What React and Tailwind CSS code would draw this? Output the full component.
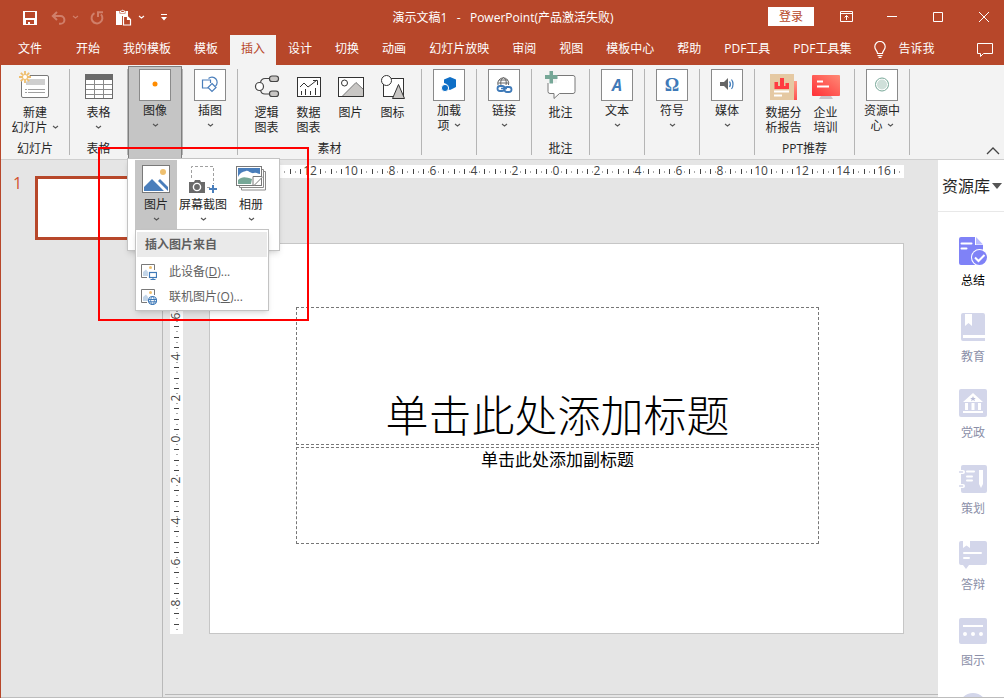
import React from 'react';
import clsx from 'clsx';

const TABS = ['开始', '我的模板', '模板', '插入', '设计', '切换', '动画', '幻灯片放映', '审阅', '视图', '模板中心', '帮助', 'PDF工具', 'PDF工具集'];

/* ---------- small icons ---------- */

const Chevron = ({ className = 'text-[#555]' }) => (
  <svg className={clsx('shrink-0', className)} width="7" height="5" viewBox="0 0 7 5" fill="none" stroke="currentColor" strokeWidth="1.1">
    <path d="M1 1l2.5 2L6 1" />
  </svg>
);

const SaveIcon = () => (
  <svg width="14" height="14" viewBox="0 0 14 14" fill="#fff" fillRule="evenodd">
    <path d="M0 0h14v14H0zM2 1v6h10V1zM3 9v4h2v-2h2v2h4V9z" />
  </svg>
);

const UndoIcon = () => (
  <svg width="15" height="14" viewBox="0 0 15 14" fill="none" stroke="#d07f6a" strokeWidth="2">
    <path d="M6 1L1.8 5 6 9M2 5h7.5a3.8 3.8 0 010 7.8H8" />
  </svg>
);

const RedoIcon = () => (
  <svg width="14" height="14" viewBox="0 0 14 14" fill="none" stroke="#d07f6a" strokeWidth="2">
    <path d="M4.5 2.2A5.4 5.4 0 1011 3.4M8 6V1.2h5" />
  </svg>
);

const PasteIcon = () => (
  <svg width="16" height="17" viewBox="0 0 16 17">
    <path d="M0 2h3.5v2.5h6V2H12v5H6v9H0z" fill="#fff" />
    <path d="M4.5 3.5V2h1a1.2 1.2 0 012.2 0h1v1.5z" fill="none" stroke="#fff" />
    <path d="M7.5 7.500h4l3 3v5.500h-7zM11.500 7.500v3h3" fill="none" stroke="#fff" strokeWidth="1.2" />
  </svg>
);

const CustomizeIcon = () => (
  <svg width="6" height="8" viewBox="0 0 6 8" fill="#fff">
    <path d="M0 0h6v1H0zM0 3h6L3 6.500z" />
  </svg>
);

/* ---------- ribbon icons, 32px ---------- */

const NewSlideIcon = () => (
  <svg width="32" height="32" viewBox="0 0 32 32" fill="none">
    <rect x="2.500" y="4.500" width="27" height="22" rx="1.500" fill="#fff" stroke="#797979" />
    <path d="M7 8h19v6H7z" fill="#cfcfcf" />
    <path d="M6 18.500h2m1 0h17M6 21.500h2m1 0h17" stroke="#a0a0a0" />
    <circle cx="6" cy="6" r="5" fill="#f3f3f3" />
    <path d="M6 0v12M0 6h12M1.800 1.800l8.400 8.400M10.200 1.800l-8.400 8.400" stroke="#efbe6d" strokeWidth="1.800" />
    <circle cx="6" cy="6" r="2" fill="#fff" />
  </svg>
);

const TableIcon = () => (
  <svg width="32" height="32" viewBox="0 0 32 32" fill="none">
    <rect x="2.500" y="3.500" width="27" height="24" fill="#fff" stroke="#6a6a6a" />
    <path d="M2 3h28v6H2z" fill="#6a6a6a" />
    <path d="M3 13.500h26M3 18.500h26M3 23.500h26M11.500 9v18M20.500 9v18" stroke="#8b8b8b" />
  </svg>
);

const LogicIcon = () => (
  <svg width="32" height="32" viewBox="0 0 32 32" fill="none" stroke="#444" strokeWidth="1.200">
    <path d="M18 7.500h-4c-3 0-4 1-4.500 4M18 23h-4c-3 0-4-1-4.500-4" />
    <circle cx="8.500" cy="15.500" r="4" fill="#fff" />
    <rect x="18.500" y="5" width="9" height="5.500" rx="2.500" fill="#c8c6c4" />
    <rect x="18.500" y="20" width="9" height="5.500" rx="2.500" fill="#c8c6c4" />
  </svg>
);

const DataChartIcon = () => (
  <svg width="32" height="32" viewBox="0 0 32 32" fill="none" stroke="#333">
    <rect x="4.500" y="6.500" width="23" height="19" fill="#fff" />
    <path d="M8.500 20v4M12.500 18v6M17.500 20v4M22.500 17v7" />
    <path d="M7 16l4-4 4 4 4-3 5-4M20 9.500h4.500V14" />
  </svg>
);

const ImageIcon = () => (
  <svg width="32" height="32" viewBox="0 0 32 32" fill="none" stroke="#333">
    <rect x="3.500" y="6.500" width="25" height="19" fill="#fff" />
    <path d="M7 25.500l14-14 7.500 7v7z" fill="#c8c6c4" stroke="#777" />
    <circle cx="9.500" cy="12" r="3" fill="#fff" />
    <path d="M3.500 25.500h25v-19" />
  </svg>
);

const ShapesIcon = () => (
  <svg width="32" height="32" viewBox="0 0 32 32" fill="none" stroke="#333">
    <rect x="6.500" y="7.500" width="20" height="18" fill="#fff" />
    <circle cx="9.500" cy="9.500" r="5" fill="#fff" />
    <path d="M15.500 27.500l6-14 6 14z" fill="#c8c6c4" />
  </svg>
);

const CommentIcon = () => (
  <svg width="32" height="32" viewBox="0 0 32 32" fill="none">
    <path d="M5.500 4.500h22.500a2 2 0 012 2v14a2 2 0 01-2 2H14.500l-5.500 5v-5H5a2 2 0 01-2-2v-14z" fill="#fff" stroke="#797979" />
    <path d="M0 0h12v12H0z" fill="#f3f3f3" />
    <path d="M4.500 0H8v4h4.500v4H8v4.500H4.500V8H0V4h4.500z" fill="#76a797" />
  </svg>
);

const ReportIcon = () => (
  <svg width="32" height="32" viewBox="0 0 32 32">
    <defs>
      <linearGradient id="report" x1="0" y1="0" x2="0" y2="1">
        <stop offset="0" stopColor="#ff9a86" />
        <stop offset="1" stopColor="#ff4f50" />
      </linearGradient>
    </defs>
    <path d="M20 10h9v19h-9z" fill="url(#report)" />
    <path d="M2 3h24v26H2z" fill="#e5c9a3" />
    <path d="M6.500 11H10v7H6.500zM12 7h4v11h-4zM17.500 12H21v6h-3.500zM6.500 15H21v3H6.500z" fill="#ff3b41" />
    <path d="M6 20.500h15M6 24.500h8" stroke="#fff" strokeWidth="2" />
  </svg>
);

const TrainingIcon = () => (
  <svg width="32" height="32" viewBox="0 0 32 32">
    <defs>
      <linearGradient id="training" x1="0" y1="1" x2="1" y2="0">
        <stop offset="0" stopColor="#ff2f36" />
        <stop offset="1" stopColor="#ff8a76" />
      </linearGradient>
    </defs>
    <path d="M11 25h10l2 3H9z" fill="#c9c4c9" />
    <rect x="2" y="4" width="28" height="21" rx="1" fill="url(#training)" />
    <path d="M7 10.500h6M7 15.500h12" stroke="#fff" strokeWidth="2" />
  </svg>
);

/* ---------- glyphs in the boxed (collapsed) groups, 20px ---------- */

const DotGlyph = () => (
  <svg width="20" height="20" viewBox="0 0 20 20"><circle cx="10" cy="9" r="2.500" fill="#ff8c00" /></svg>
);

const IllustrationGlyph = () => (
  <svg width="20" height="20" viewBox="0 0 20 20" fill="none" stroke="#4a7ebb" strokeWidth="1.200">
    <path d="M8 13H2.500V5h8v3" />
    <path d="M8.500 3.500a5 5 0 117 7.500" />
    <path d="M12 8.500l4 4-4 4-4-4z" fill="#fff" />
  </svg>
);

const AddinGlyph = () => (
  <svg width="20" height="20" viewBox="0 0 20 20" fill="#0f6fc6">
    <path d="M11 2l6 2.500v7.500l-6 3-3.500-1.500V9L5 8V4.500z" />
    <circle cx="6" cy="13" r="3.600" stroke="#fff" />
  </svg>
);

const LinkGlyph = () => (
  <svg width="20" height="20" viewBox="0 0 20 20" fill="none">
    <path d="M4 10a5.500 5.500 0 1110.500 0M3.800 8h11M9.500 2.500c-3 2-3 5-2.500 7.500M9.500 2.500c3 2 3 5 2.500 7.500M5 5h9" stroke="#666" />
    <rect x="3.500" y="11" width="7" height="5" rx="2.500" stroke="#3f7ab8" strokeWidth="1.800" />
    <rect x="10.500" y="12" width="7" height="5" rx="2.500" stroke="#3f7ab8" strokeWidth="1.800" />
    <path d="M7 13.500h6" stroke="#3f7ab8" strokeWidth="1.500" />
  </svg>
);

const MediaGlyph = () => (
  <svg width="20" height="20" viewBox="0 0 20 20" fill="none">
    <path d="M3 7h4l4-4v12l-4-4H3z" fill="#666" />
    <path d="M12.500 6.500c1 1.500 1 4 0 5.500M14.500 4.500c2 2.500 2 7 0 9.500" stroke="#3f7ab8" strokeWidth="1.200" />
  </svg>
);

const ResourceGlyph = () => (
  <svg width="20" height="20" viewBox="0 0 20 20">
    <circle cx="10" cy="9.500" r="6.500" fill="#fff" stroke="#76a797" />
    <circle cx="10" cy="9.500" r="5" fill="#cfe0da" />
  </svg>
);

/* ---------- image menu icons ---------- */

const PictureIcon = () => (
  <svg width="28" height="28" viewBox="0 0 28 28">
    <rect x=".5" y=".5" width="27" height="27" fill="#fff" stroke="#797979" />
    <circle cx="21" cy="7" r="3" fill="#efc06f" />
    <path d="M2 26v-4l8-8 12 12zM16 16l2-2 8 8v4z" fill="#4a7ebb" />
  </svg>
);

const ScreenshotIcon = () => (
  <svg width="28" height="28" viewBox="0 0 28 28" fill="none">
    <path d="M2.500 13V1.500h22V19M18 22.500h3" stroke="#a0a0a0" strokeDasharray="3 2" />
    <path d="M0 17h5l1-2h5l1 2h4v11H0z" fill="#6a6a6a" />
    <circle cx="8" cy="22" r="3.600" fill="#6a6a6a" stroke="#fff" strokeWidth="1.400" />
    <path d="M20 24h8M24 20v8" stroke="#4a7ebb" strokeWidth="2" />
  </svg>
);

const AlbumIcon = () => (
  <svg width="30" height="28" viewBox="0 0 30 28" fill="none">
    <path d="M5.500 21v4h24V6.500H26" fill="#fff" stroke="#8b8b8b" />
    <path d="M3.500 20v2.500h24V4.500H25" fill="#fff" stroke="#8b8b8b" />
    <rect x=".5" y="1.500" width="25" height="19" fill="#fff" stroke="#797979" />
    <path d="M2 3h22v8l-6 3H2z" fill="#4a7ebb" />
    <path d="M2 12c3-6 6-5 8-6s5 3 8 2 4 1 6 1v5H2z" fill="#fff" />
    <path d="M2 15c4-4 8-3 14-1l-1 5H2z" fill="#76a797" />
    <path d="M17 20.500v-9h9v1l-8 8z" fill="#fff" stroke="#797979" />
  </svg>
);

const DeviceIcon = () => (
  <svg width="16" height="16" viewBox="0 0 16 16" fill="none">
    <path d="M6 13.500H.5V.5h13V6" fill="#fff" stroke="#797979" />
    <circle cx="9.500" cy="3.500" r="1.500" fill="#efc06f" />
    <path d="M2 12V8l3-2.500L7 8v4z" fill="#c3d5e8" />
    <rect x="8.500" y="8.500" width="7" height="5" fill="#fff" stroke="#3f7ab8" strokeWidth="1.200" />
    <path d="M12 13.500V15M9.500 15.500h5" stroke="#3f7ab8" />
  </svg>
);

const OnlineIcon = () => (
  <svg width="16" height="16" viewBox="0 0 16 16" fill="none">
    <path d="M6 13.500H.5V.5h13V6" fill="#fff" stroke="#797979" />
    <circle cx="9.500" cy="3.500" r="1.500" fill="#efc06f" />
    <path d="M2 12V8l3-2.500L7 8v4z" fill="#c3d5e8" />
    <circle cx="11.500" cy="11.500" r="4" fill="#fff" stroke="#3f7ab8" strokeWidth="1.200" />
    <path d="M7.500 10.500h8M7.500 12.800h8M11.500 7.500c-2.500 2.500-2.500 5.500 0 8 2.500-2.500 2.500-5.500 0-8" stroke="#3f7ab8" />
  </svg>
);

/* ---------- resource panel icons, 28px ---------- */

const resources = [
  {
    label: '总结',
    active: true,
    icon: (
      <>
        <path d="M2 0h14v8h8v20H2a2 2 0 01-2-2V2a2 2 0 012-2z" fill="#7f82f7" />
        <path d="M17 0l7 7.500h-7z" fill="#b8baff" />
        <path d="M2.500 6.500h10M2.500 11.500h5" stroke="#fff" strokeWidth="2" strokeLinecap="round" />
        <circle cx="20.500" cy="20.500" r="8.500" fill="#fff" />
        <circle cx="20.500" cy="20.500" r="7.500" fill="#7f82f7" />
        <path d="M16 20.500l3.500 3.500 6-6" fill="none" stroke="#fff" strokeWidth="2" />
      </>
    ),
  },
  {
    label: '教育',
    icon: (
      <>
        <path d="M4 0h20a2 2 0 012 2v20H4v3h22v3H4a2 2 0 01-2-2V2a2 2 0 012-2z" fill="#d3d6ea" />
        <path d="M6 1h7v12l-3.500-3L6 13z" fill="#fff" />
      </>
    ),
  },
  {
    label: '党政',
    icon: (
      <>
        <rect width="28" height="28" rx="2" fill="#d3d6ea" />
        <path d="M14 4l10 9H4zM6 14h3v7H6zM12.500 14h3v7h-3zM19 14h3v7h-3zM4 22h20v2H4z" fill="#fff" />
        <path d="M14 7l.8 2h2l-1.500 1.300.6 2L14 11l-1.900 1.300.6-2L11.200 9h2z" fill="#b9bdd8" />
      </>
    ),
  },
  {
    label: '策划',
    icon: (
      <>
        <rect x="2" width="26" height="28" rx="2" fill="#d3d6ea" />
        <path d="M0 5h4a2 2 0 010 4H0zM0 19h4a2 2 0 010 4H0z" fill="#fff" />
        <path d="M0 7h3.500M0 21h3.500" stroke="#d3d6ea" strokeWidth="1.500" strokeLinecap="round" />
        <path d="M8 6.500h7M8 11.500h5M8 15.500h5" stroke="#fff" strokeWidth="2" strokeLinecap="round" />
        <path d="M20 5h4v14l-2 4-2-4z" fill="#fff" />
      </>
    ),
  },
  {
    label: '答辩',
    icon: (
      <>
        <path d="M2 0h24a2 2 0 012 2v20a2 2 0 01-2 2H10l-3 4-3-4H2a2 2 0 01-2-2V2a2 2 0 012-2z" fill="#d3d6ea" />
        <path d="M4 0h7v7L7.500 4.500 4 7z" fill="#fff" />
        <path d="M5 12h17M5 17h5" stroke="#fff" strokeWidth="2" strokeLinecap="round" />
      </>
    ),
  },
  {
    label: '图示',
    icon: (
      <>
        <rect y="1" width="28" height="26" rx="2" fill="#d3d6ea" />
        <path d="M4 9h20" stroke="#fff" strokeWidth="2" />
        <path d="M4 17a2 2 0 104 0 2 2 0 10-4 0M12 17a2 2 0 104 0 2 2 0 10-4 0M20 17a2 2 0 104 0 2 2 0 10-4 0" fill="#fff" />
      </>
    ),
  },
];

/* ---------- ribbon pieces ---------- */

function Group({ width, label, children }) {
  return (
    <div className="flex shrink-0">
      <div className={clsx('relative flex flex-col', width)}>
        <div className="flex flex-1 justify-center">{children}</div>
        {label && <div className="mb-[3px] h-[15px] text-center leading-[15px]">{label}</div>}
      </div>
      <div className="mt-1 h-[86px] w-px bg-[#b5b5b5]" />
    </div>
  );
}

function RibbonButton({ icon, lines, width = 'w-[42px]', menu }) {
  return (
    <button className={clsx('flex flex-col items-center pt-1.5 leading-[15px]', width)}>
      {icon}
      {lines.map((line, i) => (
        <span key={line} className={clsx('flex h-[15px] items-center gap-1 whitespace-nowrap', i === 0 && 'mt-0.5')}>
          {line}
          {menu && lines.length > 1 && i === lines.length - 1 && <Chevron />}
        </span>
      ))}
      {menu && lines.length === 1 && <span className="flex h-[15px] items-center"><Chevron /></span>}
    </button>
  );
}

function BoxedGroup({ icon, lines, active, children }) {
  return (
    <Group width="w-[54px]">
      <button
        className={clsx(
          'flex w-full flex-col items-center leading-[15px]',
          active ? 'mt-px border border-b-0 border-[#7f7f7f] bg-[#c5c5c5] pt-0.5' : 'pt-1'
        )}
      >
        <span className="flex size-8 shrink-0 items-center justify-center border border-[#8a8a8a] bg-white">{icon}</span>
        <span className="mt-0.5 whitespace-nowrap">{lines[0]}</span>
        <span className="flex h-[15px] items-center gap-1">
          {lines[1]}
          <Chevron />
        </span>
      </button>
      {children}
    </Group>
  );
}

function ImageMenu() {
  const items = [
    { label: '图片', icon: <PictureIcon />, width: 'w-[42px]', open: true },
    { label: '屏幕截图', icon: <ScreenshotIcon />, width: 'w-[52px]' },
    { label: '相册', icon: <AlbumIcon />, width: 'w-[44px]' },
  ];
  return (
    <div className="absolute top-[93px] -left-px z-10 flex h-[93px] border border-[#c3c3c3] bg-white pt-px pr-1.5 pl-[7px] shadow-md">
      {items.map(({ label, icon, width, open }) => (
        <button
          key={label}
          className={clsx('flex h-[70px] shrink-0 flex-col items-center pt-[5px] leading-[15px]', width, open && 'bg-[#c5c5c5]')}
        >
          {icon}
          <span className="mt-1 whitespace-nowrap">{label}</span>
          <span className="flex h-[15px] items-center"><Chevron /></span>
        </button>
      ))}
      <div className="absolute top-[70px] left-[7px] w-[134px] border border-[#c3c3c3] bg-white px-px pt-0.5 pb-px text-[#5f5f5f] shadow-md">
        <div className="mb-0.5 h-[25px] bg-[#eaeaea] px-2 font-bold leading-[25px]">插入图片来自</div>
        <button className="flex h-[25px] w-full items-center gap-3 px-1">
          <DeviceIcon />
          <span>此设备(<u>D</u>)...</span>
        </button>
        <button className="flex h-[25px] w-full items-center gap-3 px-1">
          <OnlineIcon />
          <span>联机图片(<u>O</u>)...</span>
        </button>
      </div>
    </div>
  );
}

/* ---------- rulers: one number every 41px, a mark every eighth of it ---------- */

function Ruler({ vertical }) {
  const half = vertical ? 195 : 347;
  const marks = [];
  for (let i = -68; i <= 68; i++) {
    const pos = Math.round((i * 41) / 8);
    if (Math.abs(pos) > half - 2) continue;
    if (i % 8 === 0) {
      marks.push(
        <text key={i} x={vertical ? 0 : pos} y={vertical ? 0 : 10} textAnchor="middle" fontSize="12" fill="#444"
          transform={vertical ? `translate(10 ${pos}) rotate(-90)` : undefined}>
          {Math.abs(i / 4)}
        </text>
      );
    } else {
      const big = i % 2 === 0;
      const from = big ? 4 : 6;
      const size = big ? 5 : 2;
      // two-digit numbers cover the marks right beside them
      const crowded = !vertical && Math.abs(i) > 36 && (i % 8 === 1 || i % 8 === -1 || i % 8 === 7 || i % 8 === -7);
      if (crowded) continue;
      marks.push(
        <rect key={i} x={vertical ? from : pos} y={vertical ? pos : from} width={vertical ? size : 1} height={vertical ? 1 : size}
          fill={big ? '#444' : '#aaa'} />
      );
    }
  }
  return (
    <svg
      className={clsx('overflow-visible bg-white', vertical ? 'h-full w-[13px]' : 'h-[13px] w-full')}
      viewBox={vertical ? '0 -196 13 391' : '-347 0 695 13'}
    >
      {marks}
    </svg>
  );
}

/* ---------- page ---------- */

export default function App() {
  return (
    <div className="relative flex h-screen flex-col overflow-hidden border-l border-[#b7472a] bg-[#e5e5e5] font-['Open_Sans','Noto_Sans_CJK_SC',sans-serif] text-xs text-[#262626]">
      <header className="shrink-0 bg-[#b7472a] text-white">
        {/* Title bar */}
        <div className="flex h-[35px] items-center">
          <div className="flex flex-1 items-center pl-[22px]">
            <button aria-label="保存"><SaveIcon /></button>
            <button aria-label="撤消" className="ml-[14px] flex items-center gap-1.5"><UndoIcon /><Chevron className="text-[#d07f6a]" /></button>
            <button aria-label="恢复" className="ml-[11px]"><RedoIcon /></button>
            <button aria-label="粘贴" className="ml-3 flex items-center gap-1.5"><PasteIcon /><Chevron className="text-white" /></button>
            <button aria-label="自定义快速访问工具栏" className="ml-4"><CustomizeIcon /></button>
          </div>
          <div className="pr-1.5 whitespace-pre">{'演示文稿1   -   PowerPoint(产品激活失败)'}</div>
          <div className="flex flex-1 items-center justify-end pr-[15px] pb-0.5">
            <button className="mr-[26px] h-[19px] w-[46px] bg-white leading-[19px] text-[#b7472a]">登录</button>
            <button aria-label="功能区显示选项" className="mr-[34px]">
              <svg width="13" height="11" viewBox="0 0 13 11" fill="none" stroke="#fff">
                <path d="M.5.5h12v10H.5zM.5 2.500h12M6.500 9V4.500M4.500 6.500l2-2 2 2" />
              </svg>
            </button>
            <button aria-label="最小化" className="mr-9">
              <svg width="10" height="10" viewBox="0 0 10 10" stroke="#fff"><path d="M0 4.500h10" /></svg>
            </button>
            <button aria-label="最大化" className="mr-9">
              <svg width="10" height="10" viewBox="0 0 10 10" fill="none" stroke="#fff"><path d="M.5.5h9v9h-9z" /></svg>
            </button>
            <button aria-label="关闭">
              <svg width="10" height="10" viewBox="0 0 10 10" stroke="#fff"><path d="M0 0l10 10M10 0L0 10" /></svg>
            </button>
          </div>
        </div>

        {/* Tabs */}
        <nav className="flex h-[30px] items-stretch gap-px whitespace-nowrap pl-[6px]">
          <button className="mr-[11px] px-[11px] pb-0.5">文件</button>
          {TABS.map((tab) => (
            <button key={tab} className={clsx('px-[11px] pb-0.5', tab === '插入' && 'bg-[#f3f3f3] text-[#b7472a]')}>
              {tab}
            </button>
          ))}
          <button className="flex items-center gap-3 px-[11px] pb-0.5">
            <svg width="12" height="17" viewBox="0 0 12 17" fill="none" stroke="#fff" strokeWidth="1.200">
              <path d="M3.500 12.500c0-3-2.700-3.500-2.700-6.800a5.200 5.200 0 0110.400 0c0 3.300-2.700 3.800-2.700 6.800zM3.500 14.500h5M4.500 16.300h3" />
            </svg>
            告诉我
          </button>
          <button aria-label="批注" className="ml-auto mr-[11px]">
            <svg width="16" height="14" viewBox="0 0 16 14" fill="none" stroke="#fff">
              <path d="M.5.5h15v10H6.500l-3 3v-3h-3z" />
            </svg>
          </button>
        </nav>
      </header>

      {/* Ribbon */}
      <div className="flex h-[95px] shrink-0 border-b border-[#cfcfcf] bg-[#f3f3f3]">
        <Group width="w-[68px]" label="幻灯片">
          <RibbonButton icon={<NewSlideIcon />} lines={['新建', '幻灯片']} width="w-[60px]" menu />
        </Group>
        <Group width="w-[57px]" label="表格">
          <RibbonButton icon={<TableIcon />} lines={['表格']} menu />
        </Group>
        <BoxedGroup icon={<DotGlyph />} lines={['图像']} active>
          <ImageMenu />
        </BoxedGroup>
        <BoxedGroup icon={<IllustrationGlyph />} lines={['插图']} />
        <Group width="w-[183px]" label="素材">
          <RibbonButton icon={<LogicIcon />} lines={['逻辑', '图表']} />
          <RibbonButton icon={<DataChartIcon />} lines={['数据', '图表']} />
          <RibbonButton icon={<ImageIcon />} lines={['图片']} />
          <RibbonButton icon={<ShapesIcon />} lines={['图标']} />
        </Group>
        <BoxedGroup icon={<AddinGlyph />} lines={['加载', '项']} />
        <BoxedGroup icon={<LinkGlyph />} lines={['链接']} />
        <Group width="w-[57px]" label="批注">
          <RibbonButton icon={<CommentIcon />} lines={['批注']} />
        </Group>
        <BoxedGroup icon={<i className="text-base font-bold leading-none text-[#3f7ab8]">A</i>} lines={['文本']} />
        <BoxedGroup icon={<span className="font-['Liberation_Serif',serif] text-lg font-bold leading-none text-[#3f7ab8]">Ω</span>} lines={['符号']} />
        <BoxedGroup icon={<MediaGlyph />} lines={['媒体']} />
        <Group width="w-[99px]" label="PPT推荐">
          <RibbonButton icon={<ReportIcon />} lines={['数据分', '析报告']} />
          <RibbonButton icon={<TrainingIcon />} lines={['企业', '培训']} />
        </Group>
        <BoxedGroup icon={<ResourceGlyph />} lines={['资源中', '心']} />
        <button aria-label="折叠功能区" className="mt-auto mr-1 mb-1 ml-auto">
          <svg width="14" height="9" viewBox="0 0 14 9" fill="none" stroke="#444" strokeWidth="1.300"><path d="M1 8l6-6 6 6" /></svg>
        </button>
      </div>

      {/* Workspace */}
      <div className="flex min-h-0 flex-1 border-b border-[#bdbdbd]">
        <aside className="flex w-[162px] shrink-0 items-start border-r border-[#b9b9b9] pt-4 pl-3">
          <span className="w-[22px] text-base leading-[14px] text-[#d35230]">1</span>
          <div className="h-16 w-[114px] border-3 border-[#b7472a] bg-white" />
        </aside>

        <main className="flex min-w-0 flex-1 flex-col pt-[5px]">
          <div className="mr-[34px] mb-[65px] ml-[46px] flex"><Ruler /></div>
          <div className="mr-[34px] ml-[7px] flex gap-[26px]">
            <div className="w-[13px] shrink-0"><Ruler vertical /></div>
            <section className="flex aspect-video flex-1 flex-col gap-0.5 border border-[#c6c6c6] bg-white pt-[63px] pr-[84px] pl-[86px] text-center text-black">
              <h1 className="flex h-[138px] items-end justify-center border border-dashed border-[#777] pb-0.5 text-[43px] leading-[52px] font-light whitespace-nowrap">
                单击此处添加标题
              </h1>
              <p className="h-[97px] border border-dashed border-[#777] text-[17px] leading-6">单击此处添加副标题</p>
            </section>
          </div>
          <div className="mt-auto mb-0.5 ml-0.5 border-t border-[#b9b9b9]" />
        </main>

        <aside className="flex w-[66px] shrink-0 flex-col overflow-hidden bg-white">
          <label className="flex h-[52px] shrink-0 items-center border-b border-[#e8e8e8] pl-1">
            <select aria-label="资源库" className="w-[50px] shrink-0 appearance-none text-base leading-6">
              <option>资源库</option>
            </select>
            <svg className="shrink-0" width="10" height="6" viewBox="0 0 10 6" fill="#555"><path d="M0 0h10L5 6z" /></svg>
          </label>
          <div className="flex flex-col pt-[25px] pl-1">
            {resources.map(({ label, active, icon }) => (
              <button key={label} className={clsx('flex h-[76px] shrink-0 flex-col items-center gap-2', active ? 'text-black' : 'text-[#8b8fa8]')}>
                <svg width="28" height="28" viewBox="0 0 28 28">{icon}</svg>
                <span className="leading-4">{label}</span>
              </button>
            ))}
            <button aria-label="更多" className="mx-auto size-7 shrink-0 rounded-full bg-[#d3d6ea]" />
          </div>
        </aside>
      </div>

      {/* Highlight frame around the image menu */}
      <div className="pointer-events-none absolute top-[147px] left-[97px] z-20 h-[174px] w-[211px] border-2 border-[#ff0000]" />
    </div>
  );
}
